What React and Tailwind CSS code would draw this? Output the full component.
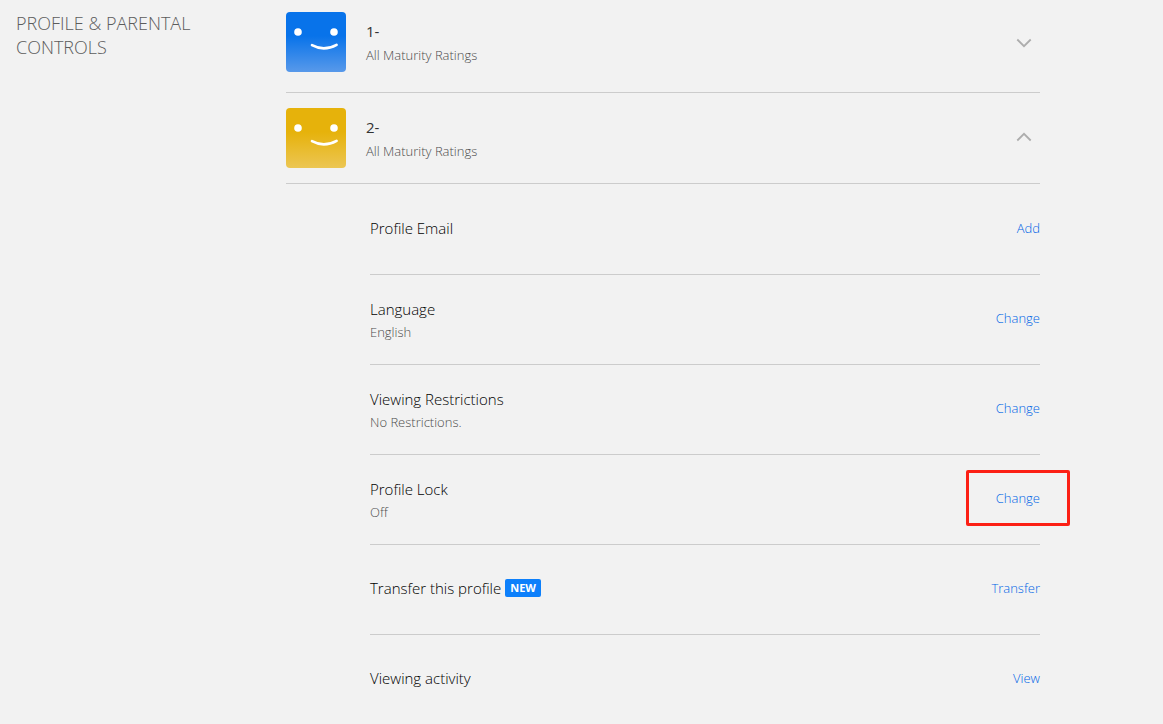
import React, { useState } from 'react';
import clsx from 'clsx';

const PROFILES = [
  { id: 'p1', name: '1-', rating: 'All Maturity Ratings', from: '#0873ea', to: '#5899ea' },
  { id: 'p2', name: '2-', rating: 'All Maturity Ratings', from: '#e6b20b', to: '#ecc653' },
];

const SETTINGS = [
  { title: 'Profile Email', action: 'Add' },
  { title: 'Language', value: 'English', action: 'Change' },
  { title: 'Viewing Restrictions', value: 'No Restrictions.', action: 'Change' },
  { title: 'Profile Lock', value: 'Off', action: 'Change', highlighted: true },
  { title: 'Transfer this profile', isNew: true, action: 'Transfer' },
  { title: 'Viewing activity', action: 'View' },
];

const Avatar = ({ id, from, to }) => (
  <svg className="size-[60px] shrink-0" viewBox="0 0 60 60" aria-hidden="true">
    <defs>
      <linearGradient id={id} x1="0" y1="0" x2="0" y2="1">
        <stop offset="0.4" stopColor={from} />
        <stop offset="1" stopColor={to} />
      </linearGradient>
    </defs>
    <rect width="60" height="60" rx="4" fill={`url(#${id})`} />
    <circle cx="12" cy="20" r="3.8" fill="#fff" />
    <circle cx="48" cy="20" r="3.8" fill="#fff" />
    <path d="M26 33.2Q38 39.8 50.6 32.8" fill="none" stroke="#fff" strokeWidth="2.6" strokeLinecap="round" />
  </svg>
);

const Chevron = ({ open }) => (
  <svg className="size-4" viewBox="0 0 16 16" fill="none" stroke="#adadad" strokeWidth="1.8" aria-hidden="true">
    <path d={open ? 'M1.3 10.5L8 3.8L14.7 10.5' : 'M1.3 5.5L8 12.2L14.7 5.5'} />
  </svg>
);

const SettingRow = ({ title, value, action, isNew, highlighted }) => (
  <li className="flex min-h-[90px] items-center justify-between border-b border-[#cccccc] pb-[3px] first:min-h-[91px]">
    <div className={clsx(value && 'pt-1')}>
      <div className="flex items-center gap-1 text-[15px] leading-6 font-light text-black">
        {title}
        {isNew && (
          <span className="rounded-xs bg-[#0d80fb] px-[5px] text-[11px] leading-[18px] font-bold text-white">
            NEW
          </span>
        )}
      </div>
      {value && <div className="text-[13px] leading-[22px] font-light text-[#4d4d4d]">{value}</div>}
    </div>
    <a href="#" className="relative text-[13px] leading-5 font-light text-[#0064e6] hover:underline">
      {action}
      {highlighted && (
        <span className="absolute -inset-x-[30px] -inset-y-[18px] rounded-xs border-3 border-[#fc2015]" />
      )}
    </a>
  </li>
);

const ProfileHeader = ({ profile, open, onToggle }) => (
  <button
    type="button"
    aria-expanded={open}
    onClick={onToggle}
    className="flex w-full cursor-pointer items-center justify-between pr-2 text-left"
  >
    <span className="flex gap-5">
      <Avatar id={profile.id} from={profile.from} to={profile.to} />
      <span className="flex flex-col gap-0.5 pt-2">
        <span className="text-[15px] leading-[22px] text-[#333333]">{profile.name}</span>
        <span className="text-[13px] leading-[22px] font-light text-[#4d4d4d]">{profile.rating}</span>
      </span>
    </span>
    <Chevron open={open} />
  </button>
);

const App = () => {
  const [openId, setOpenId] = useState('p2');

  return (
    <div className="min-h-screen bg-[#f2f2f2] font-['Segoe_UI','Open_Sans',sans-serif]">
      <section className="flex pr-[123px] pl-4">
        <h2 className="w-[270px] shrink-0 pt-[11px] pr-20 text-lg leading-6 font-light text-[#5c5c5c]">
          PROFILE &amp; PARENTAL CONTROLS
        </h2>
        <div className="min-w-0 flex-1">
          {PROFILES.map((profile, index) => (
            <div key={profile.id}>
              <div className={clsx('border-b border-[#cccccc]', index === 0 ? 'pt-3 pb-5' : 'py-[15px]')}>
                <ProfileHeader
                  profile={profile}
                  open={openId === profile.id}
                  onToggle={() => setOpenId(openId === profile.id ? null : profile.id)}
                />
              </div>
              {openId === profile.id && (
                <ul className="ml-[84px]">
                  {SETTINGS.map((setting) => (
                    <SettingRow key={setting.title} {...setting} />
                  ))}
                </ul>
              )}
            </div>
          ))}
        </div>
      </section>
    </div>
  );
};

export default App;
